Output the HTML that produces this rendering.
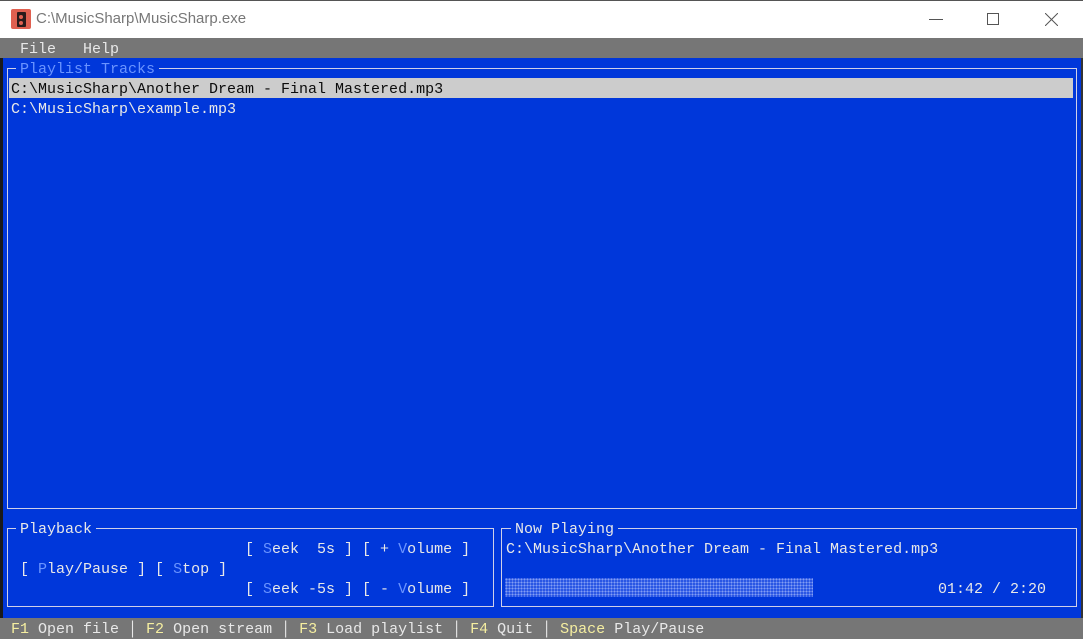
<!DOCTYPE html>
<html><head><meta charset="utf-8"><style>
*{margin:0;padding:0;box-sizing:border-box}
body{width:1083px;height:639px;overflow:hidden;background:#0037da;position:relative;font-family:"Liberation Mono",monospace;font-size:15px;color:#e8e8e8}
.t{position:absolute;line-height:20px;white-space:pre;height:20px;padding-top:2px;line-height:19px}
.f{position:absolute;border:1px solid #d0d0e8}
.h{color:#6a94ff}
.y{color:#f5eea0}
#title{position:absolute;left:0;top:0;width:1083px;height:38px;background:#fff;border-top:1px solid #555}
#menu{position:absolute;left:0;top:38px;width:1083px;height:20px;background:#767676}
#status{position:absolute;left:0;top:618px;width:1083px;height:21px;background:#767676}
</style></head><body>
<div style="position:absolute;left:0;top:38px;width:3px;height:601px;background:#1a1a1a"></div>
<div style="position:absolute;right:0;top:0;width:2px;height:639px;background:#333"></div>
<div id="title">
 <div style="position:absolute;left:11px;top:8px;width:20px;height:20px;background:#e06050;border-radius:2px"></div>
 <div style="position:absolute;left:17px;top:11px;width:9px;height:15px;background:#2a1a1a;border-radius:1px"></div>
 <div style="position:absolute;left:19px;top:14px;width:4px;height:4px;background:#e06050;border-radius:2px"></div>
 <div style="position:absolute;left:19px;top:20px;width:4px;height:4px;background:#e06050;border-radius:2px"></div>
 <div style="position:absolute;left:36px;top:9px;font-family:'Liberation Sans',sans-serif;font-size:15px;color:#777">C:\MusicSharp\MusicSharp.exe</div>
 <div style="position:absolute;left:929px;top:18px;width:14px;height:1px;background:#555"></div>
 <div style="position:absolute;left:987px;top:12px;width:12px;height:12px;border:1px solid #555"></div>
 <svg style="position:absolute;left:1045px;top:12px" width="13" height="13"><path d="M0 0L13 13M13 0L0 13" stroke="#555" stroke-width="1"/></svg>
</div>
<div id="menu"><div class="t" style="left:20px;top:0">File   Help</div></div>

<div class="f" style="left:7px;top:68px;width:1070px;height:441px"></div>
<div class="t" style="left:16px;top:58px;background:#0037da;padding-left:4px;padding-right:4px" ><span class="h">Playlist Tracks</span></div>
<div class="t" style="left:9px;top:78px;width:1064px;background:#cccccc;color:#0c0c0c;padding-left:2px">C:\MusicSharp\Another Dream - Final Mastered.mp3</div>
<div class="t" style="left:11px;top:98px">C:\MusicSharp\example.mp3</div>

<div class="f" style="left:7px;top:528px;width:487px;height:79px"></div>
<div class="t" style="left:16px;top:518px;background:#0037da;padding-left:4px;padding-right:4px">Playback</div>
<div class="t" style="left:245px;top:538px">[ <span class="h">S</span>eek  5s ] [ + <span class="h">V</span>olume ]</div>
<div class="t" style="left:20px;top:558px">[ <span class="h">P</span>lay/Pause ] [ <span class="h">S</span>top ]</div>
<div class="t" style="left:245px;top:578px">[ <span class="h">S</span>eek -5s ] [ - <span class="h">V</span>olume ]</div>

<div class="f" style="left:501px;top:528px;width:576px;height:79px"></div>
<div class="t" style="left:511px;top:518px;background:#0037da;padding-left:4px;padding-right:4px">Now Playing</div>
<div class="t" style="left:506px;top:538px">C:\MusicSharp\Another Dream - Final Mastered.mp3</div>
<div style="position:absolute;left:505px;top:578px;width:308px;height:19px;background-color:#2a56e4;background-image:radial-gradient(circle,rgba(190,205,255,.6) 0.8px,transparent 1px);background-size:3px 3px"></div>
<div class="t" style="left:938px;top:578px">01:42 / 2:20</div>

<div id="status"><div class="t" style="left:11px;top:0"><span class="y">F1</span> Open file │ <span class="y">F2</span> Open stream │ <span class="y">F3</span> Load playlist │ <span class="y">F4</span> Quit │ <span class="y">Space</span> Play/Pause</div></div>
</body></html>
